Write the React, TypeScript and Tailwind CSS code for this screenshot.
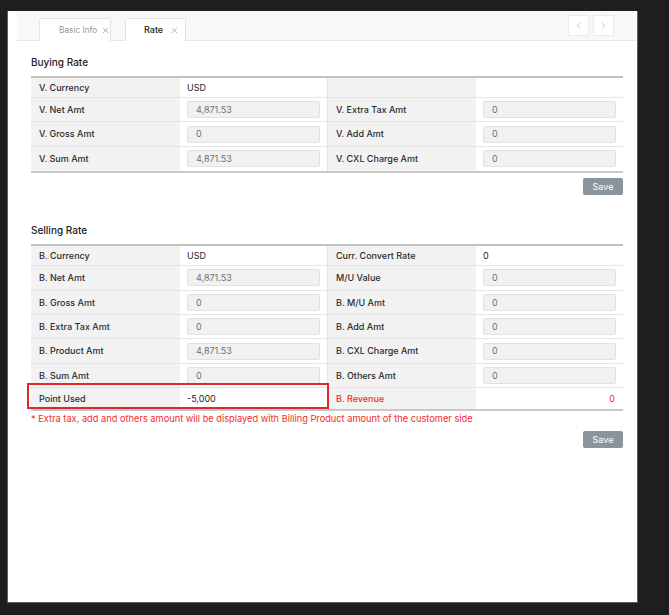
import { ChevronLeft, ChevronRight, X } from 'lucide-react'

type Cell = { label?: string; value?: string; input?: boolean; red?: boolean; right?: boolean }
type Row = [Cell, Cell]

const buying: Row[] = [
  [{ label: 'V. Currency', value: 'USD' }, {}],
  [{ label: 'V. Net Amt', value: '4,871.53', input: true }, { label: 'V. Extra Tax Amt', value: '0', input: true }],
  [{ label: 'V. Gross Amt', value: '0', input: true }, { label: 'V. Add Amt', value: '0', input: true }],
  [{ label: 'V. Sum Amt', value: '4,871.53', input: true }, { label: 'V. CXL Charge Amt', value: '0', input: true }],
]

const selling: Row[] = [
  [{ label: 'B. Currency', value: 'USD' }, { label: 'Curr. Convert Rate', value: '0' }],
  [{ label: 'B. Net Amt', value: '4,871.53', input: true }, { label: 'M/U Value', value: '0', input: true }],
  [{ label: 'B. Gross Amt', value: '0', input: true }, { label: 'B. M/U Amt', value: '0', input: true }],
  [{ label: 'B. Extra Tax Amt', value: '0', input: true }, { label: 'B. Add Amt', value: '0', input: true }],
  [{ label: 'B. Product Amt', value: '4,871.53', input: true }, { label: 'B. CXL Charge Amt', value: '0', input: true }],
  [{ label: 'B. Sum Amt', value: '0', input: true }, { label: 'B. Others Amt', value: '0', input: true }],
  [{ label: 'Point Used', value: '-5,000' }, { label: 'B. Revenue', value: '0', red: true, right: true }],
]

function Pair({ cell, first }: { cell: Cell; first?: boolean }) {
  return (
    <>
      <div
        className={`flex items-center bg-[#f2f2f2] pl-[8px] text-[9px] font-medium ${
          cell.red ? 'text-[#f02b2b]' : 'text-[#2b2b2b]'
        } ${first ? '' : 'border-l border-[#e4e4e4]'}`}
      >
        {cell.label}
      </div>
      <div className="flex items-center bg-white px-[7px]">
        {cell.input ? (
          <div className="flex h-[17px] w-full items-center rounded-[2px] border border-[#e1e1e1] bg-[#f1f1f1] pl-[8px] text-[9px] text-[#707070]">
            {cell.value}
          </div>
        ) : (
          <div
            className={`w-full text-[9px] ${cell.right ? 'pr-[1px] text-right' : ''} ${
              cell.red ? 'text-[#f02b2b]' : 'text-[#1f1f1f]'
            }`}
          >
            {cell.value}
          </div>
        )}
      </div>
    </>
  )
}

function Table({ rows, highlightLast }: { rows: Row[]; highlightLast?: boolean }) {
  return (
    <div className="border-t-2 border-b-2 border-t-[#c2c2c2] border-b-[#c9c9c9]">
      {rows.map((row, i) => {
        const last = i === rows.length - 1
        const hasInput = row[0].input || row[1].input
        return (
          <div
            key={i}
            className={`relative grid grid-cols-[149px_147px_149px_147px] ${
              hasInput ? 'h-[24.4px]' : last ? 'h-[21px]' : 'h-[20px]'
            } ${last ? '' : 'border-b border-[#e6e6e6]'}`}
          >
            <Pair cell={row[0]} first />
            <Pair cell={row[1]} />
            {last && highlightLast && (
              <div className="pointer-events-none absolute -left-[4px] -top-[5px] h-[26px] w-[302px] border-2 border-[#e3262b]" />
            )}
          </div>
        )
      })}
    </div>
  )
}

function SaveButton() {
  return (
    <div className="flex justify-end">
      <button className="h-[17px] w-[40px] rounded-[2px] bg-[#8b949c] text-[9px] text-white">Save</button>
    </div>
  )
}

export default function App() {
  return (
    <div className="min-h-screen bg-[#1e1e1e] pl-[7px] pt-[11px] font-['Inter',sans-serif]">
      <div className="h-[592px] w-[631px] border-x border-b border-[#5f5f5f] bg-white pl-[9px]">
        <div className="flex h-[30px] border-b border-[#e7e7e9] bg-[#f8f8f9]">
          <div className="flex items-end gap-[14px] pl-[22px]">
            <div className="-mb-px flex h-[23px] w-[72px] items-center gap-[4px] whitespace-nowrap rounded-t-[2px] border border-b-0 border-[#e3e3e5] bg-white pl-[19px] text-[8.25px] text-[#9a9a9a]">
              Basic Info
              <X size={9} strokeWidth={1.4} className="shrink-0 text-[#666]" />
            </div>
            <div className="-mb-px flex h-[23px] w-[61px] items-center gap-[7px] whitespace-nowrap rounded-t-[2px] border border-b-0 border-[#e3e3e5] bg-white pl-[18px] text-[9px] font-medium text-[#222]">
              Rate
              <X size={9} strokeWidth={1.4} className="shrink-0 text-[#777]" />
            </div>
          </div>
          <div className="ml-auto mr-[23px] flex items-center gap-[4px]">
            <button className="flex h-[21px] w-[21px] items-center justify-center border border-[#ebebed] bg-white text-[#9a9a9a]">
              <ChevronLeft size={9} strokeWidth={1.5} />
            </button>
            <button className="flex h-[21px] w-[21px] items-center justify-center border border-[#ebebed] bg-white text-[#9a9a9a]">
              <ChevronRight size={9} strokeWidth={1.5} />
            </button>
          </div>
        </div>

        <div className="px-[14px]">
          <div className="pt-[15px] text-[10px] font-medium leading-[12px] text-[#222]">Buying Rate</div>
          <div className="mt-[8px]">
            <Table rows={buying} />
          </div>
          <div className="mt-[5px]">
            <SaveButton />
          </div>

          <div className="mt-[29px] text-[10px] font-medium leading-[12px] text-[#222]">Selling Rate</div>
          <div className="mt-[8px]">
            <Table rows={selling} highlightLast />
          </div>
          <div className="mt-[2px] text-[9.25px] leading-[12px] text-[#f02b2b]">
            * Extra tax, add and others amount will be displayed with Billing Product amount of the customer side
          </div>
          <div className="mt-[6px]">
            <SaveButton />
          </div>
        </div>
      </div>
    </div>
  )
}
